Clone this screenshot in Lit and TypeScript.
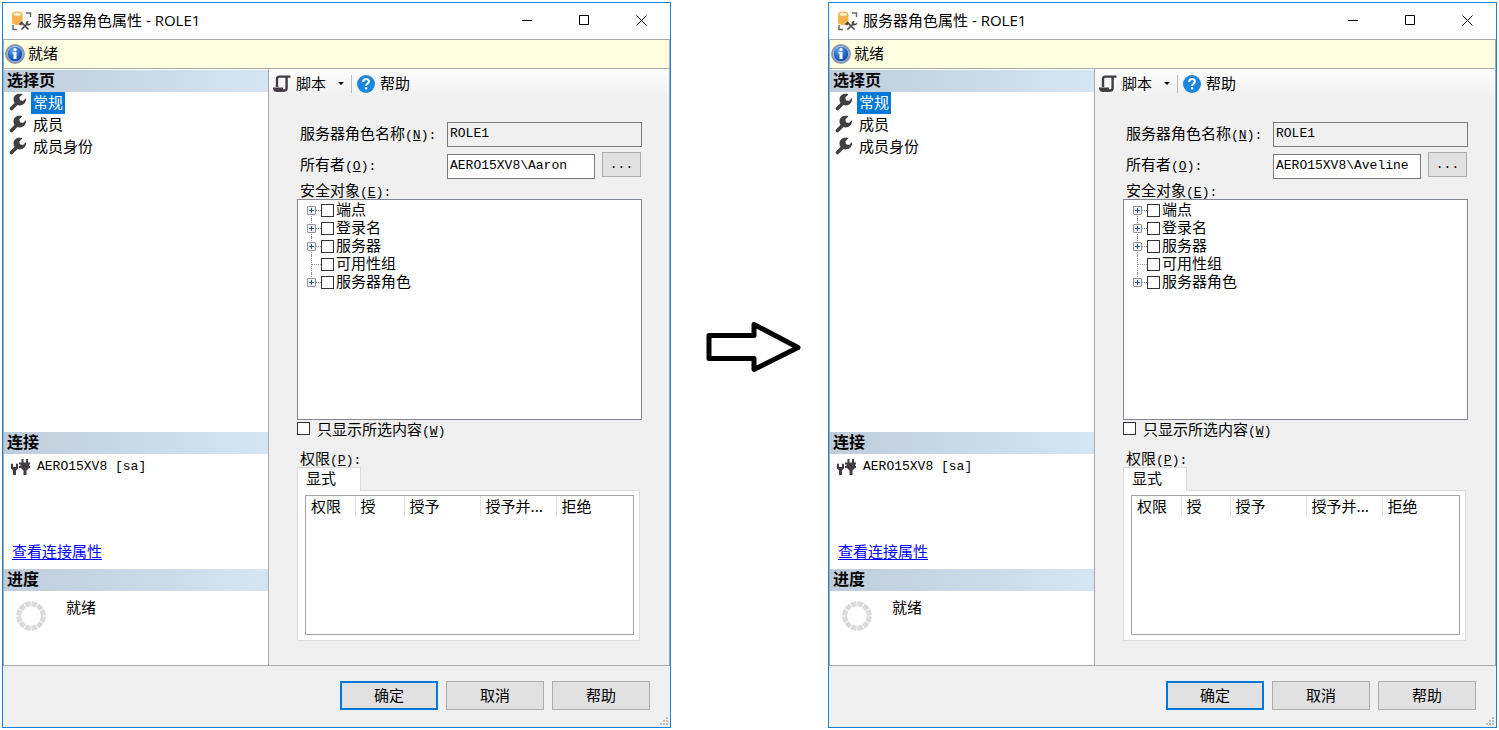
import { LitElement, html, svg, css } from "lit";
import { customElement, property } from "lit/decorators.js";

const databaseIcon = html`<svg width="20" height="20" viewBox="0 0 20 20" aria-hidden="true">
  <path d="M0 3.500v8c0 1.600 2.200 2.500 5 2.500s5.500-.9 5.500-2.500v-8z" fill="#f2b450"/>
  <ellipse cx="5.300" cy="3" rx="5.200" ry="2.500" fill="#f2b450"/>
  <ellipse cx="5.300" cy="3.200" rx="3.600" ry="1.500" fill="#fff6dc"/>
  <path d="M14 2h4.500v4M1 14v4.500h4" fill="none" stroke="#6a6a6a" stroke-width="1.500"/>
  <path d="M7 13l2.500-2.500L11.500 12 9 14.500z" fill="#444"/>
  <path d="M10.500 12.500l6 6M9.500 18.500l6-6" stroke="#444" stroke-width="1.600"/>
  <path d="M14 13.500c-1-2 .5-4 2.500-3.500l-1 2 1.500 1 2-1.500c.5 2-1.500 3.500-3.500 3z" fill="#444"/>
</svg>`;

const infoIcon = html`<svg width="20" height="20" viewBox="0 0 20 20" aria-hidden="true">
  <defs><radialGradient id="blue" cx=".4" cy=".3" r=".8">
    <stop offset="0" stop-color="#6aa7e8"/><stop offset=".55" stop-color="#1c5fc0"/><stop offset="1" stop-color="#0b36a0"/>
  </radialGradient></defs>
  <circle cx="10" cy="10" r="9" fill="url(#blue)" stroke="#8f99ad" stroke-width="2"/>
  <circle cx="10" cy="10" r="7.700" fill="none" stroke="#c3d0e4" stroke-width=".8"/>
  <circle cx="10" cy="5.600" r="1.600" fill="#fff"/>
  <path d="M7.500 8h4v7h-3V9.500h-1z" fill="#fff"/>
</svg>`;

const wrenchIcon = html`<svg width="18" height="18" viewBox="0 0 18 18" aria-hidden="true">
  <path d="M2.500 15.500L9 9" stroke="#423f42" stroke-width="3.600" stroke-linecap="round"/>
  <path d="M13.500 1.200C9.500-.2 4.500 1.500 4.500 6.300c0 3.700 2.600 6.200 6.200 6.200 4 0 6.900-3.200 6.300-7.500l-3 3-3-.8-.7-2.700z" fill="#423f42"/>
</svg>`;

const plugIcon = html`<svg width="19" height="17" viewBox="0 0 19 17" aria-hidden="true" fill="#423c44">
  <path d="M0 5l2-.5V8h3V4.500L7 5v4.500L5 11.500V16H2v-4.500L0 9.500z"/>
  <path d="M10.500 0h2v3.500h2.500V0h2v3.500h2v2h-1V7H19v2h-1l-2.500 2.500V16h-3v-4.500L10 9H8V7h1.500V5.500H8v-2h2.500z"/>
</svg>`;

const scriptIcon = html`<svg width="18" height="18" viewBox="0 0 18 18" aria-hidden="true">
  <path d="M4 12V4c0-1.500 1-2.400 2.300-2.400H17.500M13.600 2v11c0 1.700-.8 2.500-2.300 2.500H3" fill="none" stroke="#423c44" stroke-width="2.400"/>
  <path d="M0 12.500h10v2l1.500 2.200H3c-2 0-3-1.500-3-4.200z" fill="#423c44"/>
</svg>`;

const helpIcon = html`<svg width="18" height="18" viewBox="0 0 18 18" aria-hidden="true">
  <circle cx="9" cy="9" r="9" fill="#1a86dc"/>
  <path d="M6.200 7c0-1.800 1.200-2.900 2.900-2.900s2.800 1 2.800 2.500c0 2.200-2.800 2.200-2.800 4.300" fill="none" stroke="#fff" stroke-width="2"/>
  <rect x="8" y="12.200" width="2.200" height="2.200" fill="#fff"/>
</svg>`;

const spinnerIcon = html`<svg width="30" height="30" viewBox="0 0 30 30" aria-hidden="true">
  <circle cx="15" cy="15" r="12.300" fill="none" stroke="#dadada" stroke-width="5" pathLength="120" stroke-dasharray="8.600 1.400" stroke-dashoffset="-.7"/>
</svg>`;

const gripDots = [[6, 0], [3, 3], [6, 3], [0, 6], [3, 6], [6, 6]];

const securables = [
  { name: "端点", expandable: true },
  { name: "登录名", expandable: true },
  { name: "服务器", expandable: true },
  { name: "可用性组", expandable: false },
  { name: "服务器角色", expandable: true },
];

const pages = ["常规", "成员", "成员身份"];

@customElement("role-dialog")
export class RoleDialog extends LitElement {
  @property() name = "ROLE1";
  @property() owner = "";

  static styles = css`
    :host {
      display: flex;
      flex-direction: column;
      min-width: 0;
      border: 1px solid #1883d7;
      background: #f0f0f0;
      color: #000;
      font: 15px/18px "Noto Sans CJK SC", sans-serif;
    }
    * { box-sizing: border-box; }
    button, input { font: inherit; color: inherit; border-radius: 0; margin: 0; }
    button { padding: 0; }
    svg { display: block; flex: none; }
    .mono { font-family: "Liberation Mono", monospace; font-size: 13px; line-height: 13px; }
    .text { padding-bottom: 2px; }
    .title {
      display: flex;
      align-items: center;
      height: 36px;
      padding-left: 9px;
      background: #fff;
      font-family: "Open Sans", "Noto Sans CJK SC", sans-serif;
    }
    h1 { flex: 1; margin: 0 0 0 5px; font: inherit; font-size: 15px; white-space: nowrap; }
    .caption {
      display: grid;
      place-items: center;
      width: 57px;
      height: 36px;
      padding-bottom: 2px;
      border: 0;
      background: none;
    }
    .client {
      flex: 1;
      display: flex;
      flex-direction: column;
      border: solid #a9a9ae;
      border-width: 1px 1px 0;
    }
    .status {
      display: flex;
      align-items: center;
      gap: 3px;
      height: 29px;
      padding-left: 1px;
      border-bottom: 1px solid #a9a9ae;
      background: #ffffe1;
    }
    .body { flex: 1; display: flex; border-bottom: 1px solid #a9a9ae; }
    .side {
      flex: 0 0 265px;
      display: flex;
      flex-direction: column;
      padding-top: 1px;
      border-right: 1px solid #a9a9ae;
      background: #fff;
    }
    h2 {
      margin: 0;
      padding: 0 0 4px 3px;
      font-size: 16px;
      line-height: 18px;
      font-weight: 700;
      background: linear-gradient(90deg, #bfcddb, #d5e5f2);
    }
    .pages { flex: 1; }
    .page {
      display: flex;
      align-items: center;
      gap: 4px;
      height: 22px;
      padding: 0 0 0 5px;
      border: 0;
      background: none;
    }
    .page svg { margin-bottom: 2px; }
    .page span { padding: 0 2px 2px; line-height: 20px; }
    .page.current span { background: #0078d7; color: #fff; }
    .connection { height: 137px; display: flex; flex-direction: column; }
    .server { display: flex; align-items: center; gap: 7px; padding: 5px 0 0 7px; }
    .server .mono { padding-bottom: 2px; }
    .connection a { margin: auto 0 9px 8px; align-self: flex-start; color: #00f; text-underline-offset: 2px; }
    .progress { height: 96px; }
    .activity { display: flex; align-items: flex-start; gap: 20px; padding: 7px 0 0 12px; }
    .activity svg { margin-top: 3px; }
    .main { flex: 1; min-width: 0; display: flex; flex-direction: column; }
    .tools {
      display: flex;
      align-items: center;
      height: 29px;
      padding-left: 4px;
      background: linear-gradient(#fdfdfd, #f0f0f0);
    }
    .tool {
      display: flex;
      align-items: center;
      gap: 5px;
      border: 0;
      background: none;
    }
    .arrow { margin-left: 7px; border: solid transparent; border-width: 3px 3px 0; border-top-color: #000; }
    .rule { width: 1px; height: 18px; margin: 0 5px 0 7px; background: #bdbdbd; }
    form { flex: 1; display: flex; flex-direction: column; padding: 24px 27px 24px 28px; }
    .field { display: flex; gap: 7px; height: 27px; margin-bottom: 3px; }
    .field label { flex: 0 0 143px; padding: 2px 0 0 3px; white-space: nowrap; }
    .field input {
      flex: 1;
      min-width: 0;
      height: 25px;
      padding: 0 2px 2px;
      border: 1px solid #7a7a7a;
      background: #fff;
    }
    .field input[readonly] { background: #f0f0f0; }
    .owner input { align-self: flex-end; }
    .owner label { padding-top: 3px; }
    .browse {
      width: 39px;
      height: 25px;
      margin-right: 1px;
      border: 1px solid #adadad;
      background: #e1e1e1;
    }
    .heading { padding-left: 3px; line-height: 16px; }
    .tree {
      flex: 1;
      min-height: 120px;
      margin: 0;
      padding: 1px 0 0 9px;
      border: 1px solid #828790;
      background: #fff;
      list-style: none;
    }
    .tree li {
      position: relative;
      display: flex;
      align-items: center;
      height: 18px;
    }
    .tree li::before {
      content: "";
      position: absolute;
      left: 4px;
      top: 0;
      bottom: 0;
      border-left: 1px dotted #909090;
    }
    .tree li:first-child::before { top: 10px; }
    .tree li:last-child::before { bottom: 8px; }
    .stub { width: 10px; margin-left: 4px; border-top: 1px dotted #909090; }
    .expander {
      position: relative;
      display: grid;
      place-items: center;
      width: 9px;
      height: 9px;
      border: 1px solid #919191;
      border-radius: 1px;
      background: #f4f4f4;
    }
    .expander + .stub { width: 5px; margin-left: 0; }
    .tree label { display: flex; align-items: center; gap: 2px; }
    input[type="checkbox"] {
      appearance: none;
      flex: none;
      width: 13px;
      height: 13px;
      border: 1px solid #333;
      background: #fff;
    }
    .filter { display: flex; align-items: center; gap: 7px; height: 17px; margin-bottom: 13px; }
    .tab {
      position: relative;
      align-self: flex-start;
      width: 64px;
      height: 24px;
      margin-bottom: -1px;
      padding: 0 0 4px 8px;
      border: 1px solid #dcdcdc;
      border-bottom: 0;
      background: #fff;
      text-align: left;
    }
    .panel {
      height: 151px;
      margin-right: 2px;
      padding: 4px 5px 5px 7px;
      border: 1px solid #dcdcdc;
      background: #fff;
    }
    .grid { height: 140px; border: 1px solid #a5a5a9; }
    table { width: 100%; border-collapse: collapse; table-layout: fixed; }
    th {
      height: 21px;
      padding: 0 0 2px 5px;
      border-right: 1px solid #e0e0e0;
      font-weight: 400;
      text-align: left;
      white-space: nowrap;
      overflow: hidden;
    }
    th:last-child { border: 0; }
    .c1 { width: 49px; }
    .c2 { width: 49px; }
    .c3 { width: 76px; }
    footer { position: relative; display: flex; justify-content: flex-end; gap: 8px; padding: 15px 20px 17px; }
    footer button {
      width: 98px;
      height: 29px;
      padding-bottom: 2px;
      border: 1px solid #adadad;
      background: #e1e1e1;
    }
    footer .primary { border: 2px solid #0078d7; }
    .grip { position: absolute; right: 2px; bottom: 2px; }
  `;

  render() {
    return html`
      <header class="title">
        ${databaseIcon}
        <h1 class="text">服务器角色属性 - ${this.name}</h1>
        <button class="caption" aria-label="最小化"><svg width="11" height="11"><path d="M0 5.500h10" stroke="#000"/></svg></button>
        <button class="caption" aria-label="最大化"><svg width="11" height="11"><path d="M.5.500h9v9h-9z" fill="none" stroke="#000"/></svg></button>
        <button class="caption" aria-label="关闭"><svg width="11" height="11"><path d="M.5.500l10 10M10.500.500l-10 10" stroke="#000"/></svg></button>
      </header>
      <div class="client">
        <div class="status">${infoIcon}<span class="text">就绪</span></div>
        <div class="body">
          <aside class="side">
            <h2>选择页</h2>
            <nav class="pages">
              ${pages.map((page, i) => html`<button class="page ${i === 0 ? "current" : ""}">${wrenchIcon}<span>${page}</span></button>`)}
            </nav>
            <section class="connection">
              <h2>连接</h2>
              <div class="server">${plugIcon}<span class="mono">AERO15XV8 [sa]</span></div>
              <a href="#connection">查看连接属性</a>
            </section>
            <section class="progress">
              <h2>进度</h2>
              <div class="activity">${spinnerIcon}<span>就绪</span></div>
            </section>
          </aside>
          <div class="main">
            <div class="tools">
              <button class="tool">${scriptIcon}<span class="text">脚本</span><span class="arrow"></span></button>
              <span class="rule"></span>
              <button class="tool">${helpIcon}<span class="text">帮助</span></button>
            </div>
            <form @submit=${(e: Event) => e.preventDefault()}>
              <div class="field">
                <label for="name">服务器角色名称<span class="mono">(<u>N</u>):</span></label>
                <input id="name" class="mono" readonly .value=${this.name} />
              </div>
              <div class="field owner">
                <label for="owner">所有者<span class="mono">(<u>O</u>):</span></label>
                <input id="owner" class="mono" .value=${this.owner} />
                <button type="button" class="browse mono" aria-label="浏览">...</button>
              </div>
              <div class="heading" id="securables">安全对象<span class="mono">(<u>E</u>):</span></div>
              <ul class="tree" aria-labelledby="securables">
                ${securables.map((s) => html`<li>
                  ${s.expandable
                    ? html`<span class="expander"><svg width="5" height="5"><path d="M0 2.500h5M2.500 0v5" stroke="#1e4f9e"/></svg></span>`
                    : ""}<span class="stub"></span>
                  <label><input type="checkbox" /><span class="text">${s.name}</span></label>
                </li>`)}
              </ul>
              <label class="filter"><input type="checkbox" /><span>只显示所选内容<span class="mono">(<u>W</u>)</span></span></label>
              <div class="heading">权限<span class="mono">(<u>P</u>):</span></div>
              <button type="button" class="tab" role="tab" aria-selected="true">显式</button>
              <div class="panel" role="tabpanel">
                <div class="grid">
                  <table>
                    <colgroup><col class="c1" /><col class="c2" /><col class="c3" /><col class="c3" /><col /></colgroup>
                    <thead><tr><th>权限</th><th>授</th><th>授予</th><th>授予并...</th><th>拒绝</th></tr></thead>
                  </table>
                </div>
              </div>
            </form>
          </div>
        </div>
      </div>
      <footer>
        <button class="primary">确定</button>
        <button>取消</button>
        <button>帮助</button>
        <svg class="grip" width="8" height="8" aria-hidden="true">
          ${gripDots.map(([x, y]) => svg`<rect x=${x} y=${y} width="2" height="2" fill="#bcbcbc"/>`)}
        </svg>
      </footer>
    `;
  }
}

@customElement("app-root")
export class AppRoot extends LitElement {
  static styles = css`
    :host {
      box-sizing: border-box;
      display: grid;
      grid-template-columns: 1fr 157px 1fr;
      min-height: 100vh;
      padding: 2px;
      background: #fff;
    }
    .between { display: grid; padding: 0 0 37px 8px; }
    .arrow { place-self: center; }
  `;

  render() {
    return html`
      <role-dialog owner="AERO15XV8\\Aaron"></role-dialog>
      <div class="between">
        <svg class="arrow" width="96" height="52" viewBox="0 0 96 52" aria-hidden="true">
          <path d="M3 14.500h45V3.500L92 26.500 48 48.500V37.500H3z" fill="#fff" stroke="#000" stroke-width="5" stroke-linejoin="round"/>
        </svg>
      </div>
      <role-dialog owner="AERO15XV8\\Aveline"></role-dialog>
    `;
  }
}
